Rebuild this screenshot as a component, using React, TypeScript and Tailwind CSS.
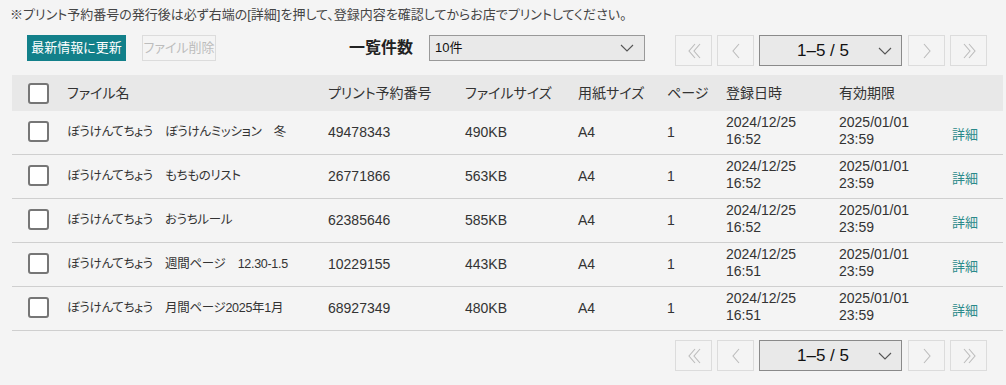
import React from "react";

const rows = [
  { name: "ぼうけんてちょう　ぼうけんミッション　冬", no: "49478343", size: "490KB", reg: "16:52", },
  { name: "ぼうけんてちょう　もちものリスト", no: "26771866", size: "563KB", reg: "16:52" },
  { name: "ぼうけんてちょう　おうちルール", no: "62385646", size: "585KB", reg: "16:52" },
  { name: "ぼうけんてちょう　週間ページ　12.30-1.5", no: "10229155", size: "443KB", reg: "16:51" },
  { name: "ぼうけんてちょう　月間ページ2025年1月", no: "68927349", size: "480KB", reg: "16:51" },
];

const cols = "grid grid-cols-[55px_261px_137px_113px_89px_59px_113px_113px_51px]";

function Chevron({ dir }: { dir: "left" | "right" | "dleft" | "dright" }) {
  const paths: Record<string, string> = {
    left: "M11 3 L5 10 L11 17",
    right: "M5 3 L11 10 L5 17",
    dleft: "M9 3 L3 10 L9 17 M14 3 L8 10 L14 17",
    dright: "M3 3 L9 10 L3 17 M8 3 L14 10 L8 17",
  };
  return (
    <svg width="16" height="20" viewBox="0 0 16 20" fill="none" stroke="#bcbcbc" strokeWidth="1.1">
      <path d={paths[dir]} />
    </svg>
  );
}

function Caret() {
  return (
    <svg width="14" height="8" viewBox="0 0 14 8" fill="none" stroke="#555" strokeWidth="1.1">
      <path d="M1 1 L7 7 L13 1" />
    </svg>
  );
}

function Checkbox() {
  return <div className="w-[21px] h-[21px] rounded-[3px] border-2 border-[#767676] bg-white" />;
}

function Pager() {
  const btn = "w-[37px] h-[31px] border border-[#dcdcdc] flex items-center justify-center bg-[#f4f4f4]";
  return (
    <div className="flex items-center">
      <div className={btn}><Chevron dir="dleft" /></div>
      <div className={btn + " ml-[5px]"}><Chevron dir="left" /></div>
      <div className="ml-[5px] w-[143px] h-[31px] border border-[#8a8a8a] bg-[#e9e9e9] flex items-center pl-[37px] pr-[9px] justify-between">
        <span className="text-[17px] text-[#111] font-['Liberation_Sans',sans-serif]">1–5 / 5</span>
        <Caret />
      </div>
      <div className={btn + " ml-[6px]"}><Chevron dir="right" /></div>
      <div className={btn + " ml-[5px]"}><Chevron dir="dright" /></div>
    </div>
  );
}

export default function App() {
  return (
    <div className="w-[1006px] h-[385px] bg-[#f4f4f4] text-[#333] font-['Liberation_Sans','Noto_Sans_CJK_JP',sans-serif] [font-feature-settings:'palt'] overflow-hidden">
      <p className="pl-[10px] pt-[6px] text-[13px] leading-[18px] text-[#444]">
        ※プリント予約番号の発行後は必ず右端の[詳細]を押して、登録内容を確認してからお店でプリントしてください。
      </p>

      <div className="flex items-start mt-[11px] h-[31px]">
        <button className="ml-[27px] w-[99px] h-[26px] bg-[#12808a] text-white text-[13px] leading-[26px]">
          最新情報に更新
        </button>
        <button className="ml-[16px] w-[74px] h-[26px] border border-[#dcdcdc] text-[#bdbdbd] text-[13px] leading-[24px]">
          ファイル削除
        </button>
        <span className="ml-[133px] mt-[2px] text-[16px] font-bold text-[#222] leading-[22px]">一覧件数</span>
        <div className="ml-[16px] w-[216px] h-[26px] border border-[#999] bg-[#e9e9e9] flex items-center justify-between pl-[5px] pr-[10px]">
          <span className="text-[13px] text-[#111]">10件</span>
          <Caret />
        </div>
        <div className="ml-[30px]">
          <Pager />
        </div>
      </div>

      <div className="ml-[12px] mt-[9px] w-[991px] text-[14px]">
        <div className={cols + " h-[36px] items-center bg-[#e8e8e8]"}>
          <div className="pl-[16px] flex items-center"><Checkbox /></div>
          <div>ファイル名</div>
          <div>プリント予約番号</div>
          <div>ファイルサイズ</div>
          <div>用紙サイズ</div>
          <div>ページ</div>
          <div>登録日時</div>
          <div>有効期限</div>
          <div />
        </div>
        {rows.map((r) => (
          <div key={r.no} className={cols + " h-[44px] items-center border-b border-[#cfcfcf]"}>
            <div className="pl-[16px] flex items-center -mt-[3px]"><Checkbox /></div>
            <div className="text-[12.5px] tracking-[-0.3px]">{r.name}</div>
            <div>{r.no}</div>
            <div>{r.size}</div>
            <div>A4</div>
            <div>1</div>
            <div className="leading-[17px] -mt-[3px]">2024/12/25<br />{r.reg}</div>
            <div className="leading-[17px] -mt-[3px]">2025/01/01<br />23:59</div>
            <div className="text-[#2a8a8a] text-[13px] pt-[4px]">詳細</div>
          </div>
        ))}
      </div>

      <div className="flex mt-[9px] pl-[675px]">
        <Pager />
      </div>
    </div>
  );
}
